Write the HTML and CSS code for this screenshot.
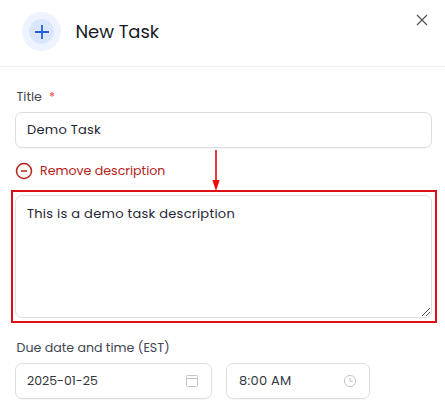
FILE: index.html
```html
<!DOCTYPE html>
<html lang="en">
<head>
<meta charset="utf-8">
<title>New Task</title>
<link rel="stylesheet" href="styles.css">
</head>
<body>
<header class="header">
  <span class="badge"><span class="badge-core"><svg width="14" height="14" viewBox="0 0 14 14"><path d="M7 0v14M0 7h14"/></svg></span></span>
  <h1 class="heading"><span>New Task</span></h1>
  <button class="close" aria-label="Close"><svg width="12" height="12" viewBox="0 0 12 12"><path d="M1 1l10 10M11 1L1 11"/></svg></button>
</header>
<main class="form">
  <div class="label"><span>Title</span><span class="required">*</span></div>
  <div class="field"><span>Demo Task</span></div>
  <div class="remove">
    <svg width="18" height="18" viewBox="0 0 18 18"><circle cx="9" cy="9" r="7.5"/><path d="M6 9h6"/></svg>
    <span>Remove description</span>
  </div>
  <div class="area">
    <span>This is a demo task description</span>
    <svg class="grip" width="10" height="10" viewBox="0 0 10 10"><path d="M1 9L9 1M5 9L9 5"/></svg>
    <div class="highlight"></div>
    <svg class="arrow" width="8" height="42" viewBox="0 0 8 42"><path class="shaft" d="M4 0v32"/><path class="head" d="M.4 30h7.2L4 41z"/></svg>
  </div>
  <div class="label due"><span>Due date and time (EST)</span></div>
  <div class="row">
    <div class="field date"><span>2025-01-25</span>
      <svg class="icon" width="14" height="14" viewBox="0 0 14 14"><rect x="1.5" y="1.5" width="11" height="11" rx="1"/><path d="M1.5 4.5h11"/></svg></div>
    <div class="field time"><span>8:00 AM</span>
      <svg class="icon" width="14" height="14" viewBox="0 0 14 14"><circle cx="7" cy="7" r="5.6"/><path d="M7 3.5V7.3h3"/></svg></div>
  </div>
</main>
</body>
</html>
```
FILE: styles.css
```css
* { box-sizing: border-box; }
body { margin: 0; width: 445px; height: 416px; overflow: hidden; background: #fff; color: #1f2633; font-family: Poppins, Inter, sans-serif; font-size: 13px; letter-spacing: .26px; }
svg { display: block; fill: none; flex: none; }
span { white-space: nowrap; }
.header { height: 67px; border-bottom: 1px solid #f0f0f2; display: flex; align-items: flex-start; padding: 12px 17px 0 22px; }
.badge { width: 39px; height: 39px; border-radius: 50%; background: #eff3ff; display: grid; place-items: center; }
.badge-core { width: 25px; height: 25px; border-radius: 50%; background: #d9e6fd; display: grid; place-items: center; }
.badge path { stroke: #2360d8; stroke-width: 1.8; }
.heading { margin: 0 auto 0 14.5px; font-size: 18px; font-weight: 400; letter-spacing: -.05px; line-height: 39px; color: #171c28; }
.close { border: 0; background: none; padding: 2px 0 0; }
.close path { stroke: #555; stroke-width: 1.3; }
.form { padding: 20px 13px 0 15px; }
.label { height: 25px; line-height: 20px; padding-left: 1.5px; color: #414651; font-size: 12.6px; letter-spacing: 0; display: flex; gap: 7px; }
.required { color: #e34b42; }
.field { height: 36px; border: 1px solid #dcdee2; border-radius: 7px; padding: 0 11px; display: flex; align-items: center; justify-content: space-between; box-shadow: 0 1px 1px #1018280a; }
.remove { height: 47px; padding-bottom: 1px; display: flex; align-items: center; gap: 7px; color: #b42318; font-size: 12.6px; letter-spacing: 0; }
.remove svg { stroke: #b42318; stroke-width: 1.5; }
.area { position: relative; height: 123px; border: 1px solid #dcdee2; border-radius: 7px; padding: 8px 11px; line-height: 20px; }
.grip { position: absolute; right: 0; bottom: 0; stroke: #555; stroke-width: 1; }
.highlight { position: absolute; inset: -6px -6px -6px -5px; border: 2px solid #dc1014; }
.arrow { position: absolute; left: 195.5px; top: -46px; }
.shaft { stroke: #e8151a; stroke-width: 1.7; }
.head { fill: #f3050b; }
.due { margin-top: 20px; }
.row { display: flex; gap: 14px; }
.date { width: 197px; color: #33363d; font-size: 12.5px; letter-spacing: 0; }
.time { width: 144px; padding-left: 12px; color: #33363d; }
.icon { stroke: #c3c5c8; stroke-width: 1; margin-right: 1px; }
```
